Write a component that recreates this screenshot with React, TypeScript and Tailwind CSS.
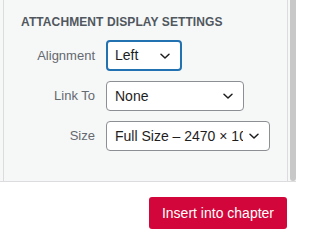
import React from "react";

const font = { fontFamily: '"Liberation Sans", Arial, sans-serif' };

function Chevron() {
  return (
    <svg width="12" height="12" viewBox="0 0 12 12" className="shrink-0">
      <path d="M2 4.2 L6 8 L10 4.2" fill="none" stroke="#1e1e1e" strokeWidth="1.5" strokeLinecap="round" strokeLinejoin="round" />
    </svg>
  );
}

function Field({
  label,
  value,
  width,
  focused,
}: {
  label: string;
  value: string;
  width: string;
  focused?: boolean;
}) {
  return (
    <div className="flex items-center">
      <div className="w-[96px] shrink-0 text-right pr-[11px] text-[13px] text-[#646970]">{label}</div>
      <div
        className={
          focused
            ? `${width} h-[31px] flex items-center gap-[5px] rounded-[4px] border-2 border-[#2271b1] bg-white pl-[7px] pr-[9px]`
            : `${width} h-[30px] flex items-center gap-[5px] rounded-[4px] border border-[#8c8f94] bg-white pl-[8px] pr-[9px]`
        }
      >
        <span className="flex-1 min-w-0 overflow-hidden whitespace-nowrap text-[14px] text-[#1e1e1e]">{value}</span>
        <Chevron />
      </div>
    </div>
  );
}

export default function App() {
  return (
    <div className="w-[296px] h-[237px] bg-white flex flex-col" style={font}>
      <div className="h-[182px] flex bg-[#f6f7f7] border-b border-[#dcdcde]">
        <div className="w-[3px] shrink-0" />
        <div className="flex-1 border-l border-r border-[#dcdcde] flex flex-col">
          <div className="pl-[17px] pt-[13px] text-[12px] font-bold tracking-[0.1px] text-[#50575e]">
            ATTACHMENT DISPLAY SETTINGS
          </div>
          <div className="mt-[9px] flex flex-col gap-[10px] pl-[6px]">
            <Field label="Alignment" value="Left" width="w-[76px]" focused />
            <Field label="Link To" value="None" width="w-[138px]" />
            <Field label="Size" value="Full Size – 2470 × 1040" width="w-[164px]" />
          </div>
        </div>
        <div className="w-[8px] shrink-0 flex justify-end">
          <div className="w-[6px] h-full bg-[#c8c8c8] rounded-b-[3px]" />
        </div>
      </div>
      <div className="flex justify-end pt-[15px] pr-[9px]">
        <button className="h-[32px] px-[13px] rounded-[3px] bg-[#d2063a] text-white text-[14px] font-medium">
          Insert into chapter
        </button>
      </div>
    </div>
  );
}
